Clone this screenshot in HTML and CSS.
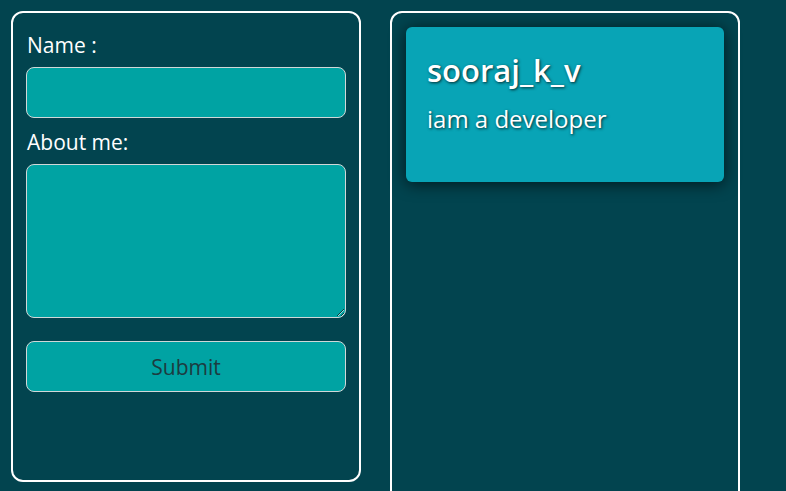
FILE: index.html
```html
<!DOCTYPE html>
<html>
<head>
<meta charset="utf-8">
<link rel="stylesheet" href="styles.css">
</head>
<body>
<div class="container">
  <form class="panel form-panel">
    <label class="label" for="name">Name :</label>
    <input class="field" id="name" type="text">
    <label class="label" for="about">About me:</label>
    <textarea class="field area" id="about"></textarea>
    <button class="submit" type="button">Submit</button>
  </form>
  <div class="panel list-panel">
    <div class="card">
      <h2 class="card-title">sooraj_k_v</h2>
      <p class="card-text">iam a developer</p>
    </div>
  </div>
</div>
</body>
</html>
```
FILE: styles.css
```css
html, body {
  margin: 0;
  padding: 0;
  background: #02444f;
  font-family: "Open Sans", "Noto Sans", sans-serif;
  color: #ffffff;
  overflow: hidden;
  height: 100%;
}
.container {
  display: flex;
  gap: 29px;
  padding: 11px;
  align-items: flex-start;
}
.panel {
  box-sizing: border-box;
  width: 350px;
  border: 2px solid #ffffff;
  border-radius: 12px;
  flex: none;
}
.form-panel {
  height: 471px;
  padding: 19px 13px;
  display: flex;
  flex-direction: column;
}
.label {
  font-size: 21px;
  line-height: 26px;
  margin: 0 0 9px 1px;
}
.field {
  box-sizing: border-box;
  width: 320px;
  height: 51px;
  background: #00a3a3;
  border: 1px solid #d0d8d8;
  border-radius: 8px;
  margin: 0 0 11px 0;
  font: inherit;
  color: #fff;
  outline: none;
}
.area {
  height: 154px;
  resize: vertical;
  margin-bottom: 23px;
}
.submit {
  box-sizing: border-box;
  width: 320px;
  height: 51px;
  background: #00a3a3;
  border: 1px solid #d0d8d8;
  border-radius: 8px;
  font-family: "Open Sans", "Noto Sans", sans-serif;
  font-size: 21px;
  color: #1d3b40;
  padding: 0;
}
.list-panel {
  height: 500px;
  padding: 14px;
}
.card {
  height: 155px;
  background: #08a4b6;
  border-radius: 6px;
  box-shadow: 0 2px 16px rgba(0, 0, 0, 0.65);
  padding: 12px 21px;
  box-sizing: border-box;
}
.card-title {
  margin: 0;
  font-size: 31px;
  font-weight: 600;
  line-height: 62px;
  text-shadow: 1px 1px 3px rgba(0, 0, 0, 0.75);
}
.card-text {
  margin: 0;
  font-size: 24px;
  line-height: 36px;
  text-shadow: 1px 1px 3px rgba(0, 0, 0, 0.75);
}
```
